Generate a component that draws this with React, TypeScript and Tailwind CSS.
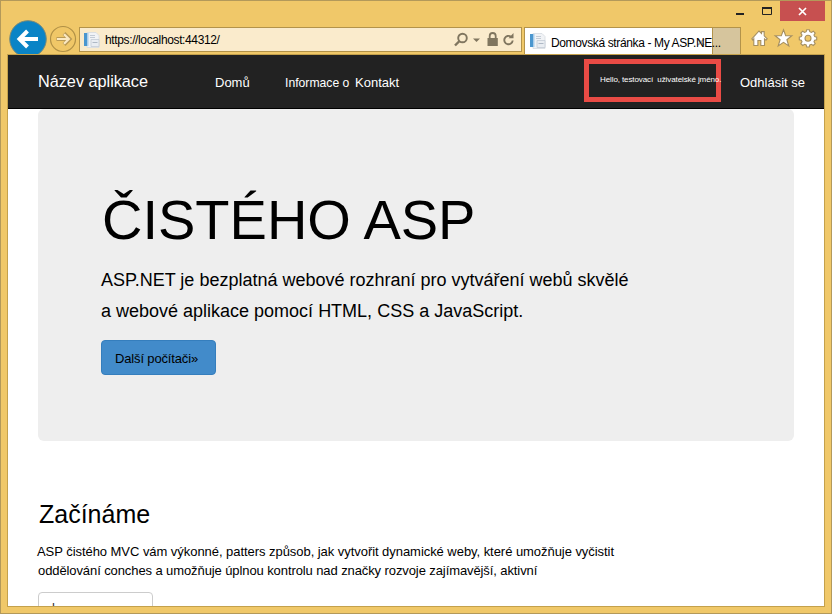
function PageIcon() {
  return (
    <svg width="16" height="16" viewBox="0 0 16 16" className="shrink-0">
      <path d="M3 .5h9l3 3V15.5H3z" fill="#f1f3f6" stroke="#d5dae1" strokeWidth=".8" />
      <path d="M0 1h4v13H0z" fill="#4b97cf" />
      <path d="M3 1h1.5v13H3z" fill="#a9cdea" />
      <path d="M6 3.500h5M6 5.500h5" stroke="#c3cbd5" />
      <path d="M7 7.500h8v7H7z" fill="#e9edf2" stroke="#c3cbd5" strokeWidth=".8" />
      <path d="M8.500 10.500h5" stroke="#aeb8c5" />
    </svg>
  );
}

function BackForward() {
  return (
    <svg width="71" height="53" viewBox="0 0 71 53" className="ml-[6px] shrink-0">
      <circle cx="21" cy="38" r="18.300" fill="#0a84c6" stroke="#7b8b79" strokeWidth="1" />
      <path d="M31 38H13M20.500 30L12.500 38l8 8" fill="none" stroke="#fff" strokeWidth="4" />
      <circle cx="56" cy="38" r="12.500" fill="#f0c767" stroke="#b09046" strokeWidth="1.200" />
      <path d="M49.500 38H61M57 32.500l5.500 5.500-5.500 5.500" fill="none" stroke="#b99a55" strokeWidth="4" />
      <path d="M50 38H61M57 33.200l4.800 4.800-4.800 4.800" fill="none" stroke="#fbe9c2" strokeWidth="2.200" />
    </svg>
  );
}

function AddressTools() {
  return (
    <svg width="62" height="22" viewBox="0 0 62 22" className="ml-auto shrink-0" fill="none" stroke="#80765f">
      <circle cx="8.500" cy="9" r="4.300" strokeWidth="1.900" />
      <path d="M5.500 12L1 16.500" strokeWidth="2.400" />
      <path d="M19 9.500h7L22.500 13z" fill="#80765f" stroke="none" />
      <path d="M33.500 9h10.300v8H33.500z" fill="#80765f" stroke="none" />
      <path d="M35.700 9.500V7a3 3 0 0 1 6 0V9.500" strokeWidth="1.800" />
      <path d="M57 7.700A4.200 4.200 0 1 0 58.700 11.500" strokeWidth="1.900" />
      <path d="M59.500 4v5.300h-5z" fill="#80765f" stroke="none" />
    </svg>
  );
}

function WindowTools() {
  return (
    <svg width="68" height="20" viewBox="0 0 68 20" fill="#fff" stroke="#a58f60" strokeWidth="1.100">
      <path d="M.8 10.800L8 3l2.500 2.400V3.600h2.700v4.200l3 3-1.200 1.400-1.500-1.300V17.500H9.800V12.500H6.900v5H2.800V10.900L1.800 12.200z" />
      <path d="M32.500 1.800l2.200 6h6.100l-4.900 3.900 1.900 6.300-5.300-3.700-5.300 3.700 1.900-6.300-4.900-3.900h6.100z" />
      <g transform="translate(57 9.500)">
        <path d="M-1.300-7.800h2.600l.5 2 1.600.7 1.900-1.200 1.900 1.900-1.200 1.900.7 1.500 2 .6v2.600l-2 .5-.7 1.500 1.200 1.900-1.900 1.900-1.900-1.200-1.600.7-.5 2h-2.600l-.5-2-1.600-.7-1.900 1.200-1.900-1.900 1.200-1.900-.7-1.500-2-.5V-.400l2-.6.7-1.500-1.200-1.900 1.900-1.900 1.900 1.200 1.600-.7z" />
        <circle cx="0" cy=".7" r="3" fill="#efc768" />
      </g>
    </svg>
  );
}

function BrowserBar() {
  return (
    <header className="flex h-[53px] w-[826px] shrink-0 overflow-hidden">
      <BackForward />
      <div className="mt-[26px] ml-px flex h-[25px] w-[443px] shrink-0 items-center border border-[#b3934a] bg-[#faebcc] pr-[5px] pl-1">
        <PageIcon />
        <span className="mt-px ml-[5px] text-[12px] tracking-[-0.37px]">https://localhost:44312/</span>
        <AddressTools />
      </div>
      <div className="relative mt-[26px] ml-[2px] flex h-[27px] w-[217px] shrink-0 border border-b-0 border-[#b3934a]">
        <div className="flex w-[188px] items-center border-r border-[#b3934a] bg-white pl-[5px]">
          <PageIcon />
          <span className="relative z-10 mt-[3px] ml-[5px] text-[12px] tracking-[-0.37px]">Domovská stránka - My ASP.NE...</span>
        </div>
        <div className="flex-1 bg-[#d6c59d]" />
        <svg width="8" height="8" viewBox="0 0 8 8" className="absolute top-[10px] left-[172px]" stroke="#aaa" strokeWidth="1.700">
          <path d="M1 1l6 6M7 1L1 7" />
        </svg>
      </div>
      <div className="flex min-w-0 flex-1 flex-col items-end">
        <div className="flex h-5 justify-end">
          <svg width="40" height="20" viewBox="0 0 40 20" className="mr-[4px] shrink-0">
            <path d="M0 13h8" stroke="#222" strokeWidth="2" />
            <path d="M26.500 7.500h9v6h-9z" fill="none" stroke="#222" />
            <path d="M26 7h10" stroke="#222" strokeWidth="2" />
          </svg>
          <div className="mr-[2px] flex h-5 w-[45px] shrink-0 items-center justify-center bg-[#c75050]">
            <svg width="9" height="9" viewBox="0 0 9 9" stroke="#fff" strokeWidth="1.700">
              <path d="M1 1l7 7M8 1L1 8" />
            </svg>
          </div>
        </div>
        <div className="mt-[7px] mr-[8px]">
          <WindowTools />
        </div>
      </div>
    </header>
  );
}

export default function App() {
  return (
    <div className="flex h-[614px] w-[832px] flex-col overflow-hidden border border-[#b3995a] bg-[#f0c869] font-['Liberation_Sans',Arial,sans-serif] whitespace-nowrap text-black">
      <BrowserBar />
      <main className="mx-[6px] h-[553px] shrink-0 overflow-hidden border border-[#c4a14c] bg-white">
        <nav className="flex h-[54px] border-b border-black bg-[#222] text-[13px] text-white">
          <div className="flex items-baseline pt-[14px]">
            <span className="ml-[30px] w-[177px] text-[16.300px] tracking-[-0.03px]">Název aplikace</span>
            <span className="w-[70px]">Domů</span>
            <span className="w-[70px] text-[12.200px]">Informace o</span>
            <span className="w-[229px]">Kontakt</span>
          </div>
          <div className="mt-1 h-[43px] w-[137px] shrink-0 border-[5px] border-[#e94b45] pt-[10px] pl-[11px] text-[8px] leading-3">
            <span className="tracking-[-0.1px]">Hello, testovací&nbsp; uživatelské jméno.</span>
          </div>
          <span className="ml-[19px] pt-[18px] leading-[20px]">Odhlásit se</span>
        </nav>
        <section className="ml-[30px] h-[332px] w-[756px] rounded-md bg-[#eee] pt-[81px] pl-[63px]">
          <h1 className="ml-px text-[56px] leading-[60px]">ČISTÉHO ASP</h1>
          <p className="mt-[15px] text-[18px] leading-[31px]">
            ASP.NET je bezplatná webové rozhraní pro vytváření webů skvělé
            <br />
            a webové aplikace pomocí HTML, CSS a JavaScript.
          </p>
          <button className="mt-[13px] block h-[35px] w-[115px] rounded border border-[#357ebd] bg-[#428bca] pt-[2px] pl-[13px] text-left text-[13px] tracking-[-0.150px]">
            Další počítači»
          </button>
        </section>
        <section className="ml-[30px]">
          <h2 className="mt-[58px] ml-px text-[25px] leading-[30px]">Začínáme</h2>
          <div className="mt-[13px] -ml-px text-[13px] leading-[19px]">
            <p className="tracking-[-0.050px]">ASP čistého MVC vám výkonné, patters způsob, jak vytvořit dynamické weby, které umožňuje vyčistit</p>
            <p className="ml-px tracking-[-0.095px]">oddělování conches a umožňuje úplnou kontrolu nad značky rozvoje zajímavější, aktivní</p>
          </div>
          <div className="mt-3 h-[35px] w-[115px] rounded border border-[#ccc] pt-[6px] pl-[13px] text-[13px] leading-[18px] text-[#333]">
            l
          </div>
        </section>
      </main>
    </div>
  );
}
